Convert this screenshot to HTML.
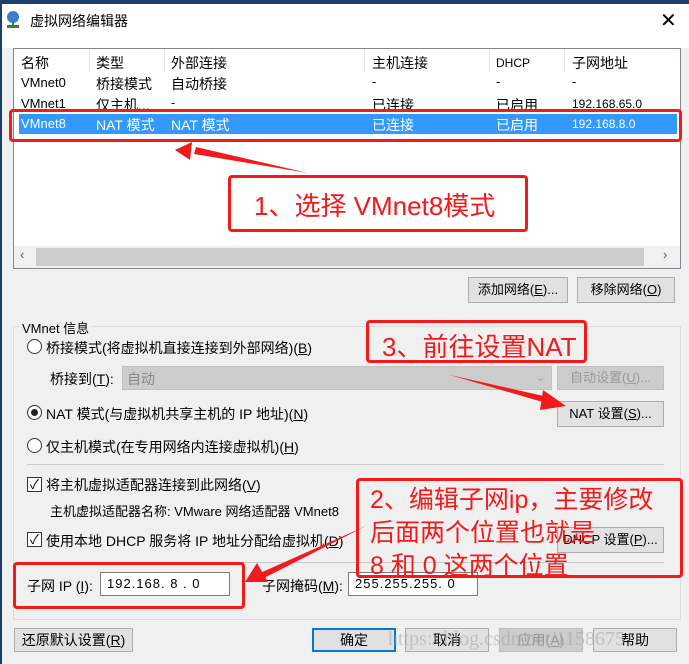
<!DOCTYPE html>
<html><head><meta charset="utf-8"><style>
*{margin:0;padding:0;box-sizing:border-box}
body{width:689px;height:664px;overflow:hidden;background:#f0f0f0;font-family:"Liberation Sans","Noto Sans CJK SC",sans-serif;font-size:13px;color:#000;position:relative}
.a{position:absolute;white-space:nowrap}
.btn{position:absolute;background:#e1e1e1;border:1px solid #adadad;text-align:center;font-size:13px}
.red{position:absolute;border:3px solid #f21a1a;border-radius:4px}
.rt{position:absolute;color:#f21a1a;font-size:26px;white-space:nowrap;font-family:"Liberation Sans","Noto Sans CJK SC",sans-serif}
.radio{position:absolute;width:15px;height:15px;border:1px solid #333;border-radius:50%;background:#fff}
.chk{position:absolute;width:15px;height:15px;border:1px solid #333;background:#fff;font-size:13px;line-height:13px;text-align:center}
.inp{position:absolute;background:#fff;border:1px solid #7a7a7a;font-size:13px;padding-left:6px;line-height:22px;letter-spacing:1px}
</style></head><body>
<div class="a" style="left:0;top:0;width:689px;height:4px;background:#1c3f6e"></div>
<div class="a" style="left:0;top:4px;width:689px;height:44px;background:#fff"></div>
<div class="a" style="left:0;top:0;width:2px;height:664px;background:#1c3f6e"></div>
<svg class="a" style="left:6px;top:10px" width="14" height="20"><circle cx="7" cy="7" r="6" fill="#3a7bd5"/><rect x="6" y="12" width="2" height="4" fill="#2a8a2a"/><rect x="1" y="15" width="12" height="3" fill="#2a8a2a"/></svg>
<div class="a" style="left:30px;top:11px;font-size:14px">虚拟网络编辑器</div>
<div class="a" style="left:660px;top:8px;font-size:20px;font-weight:300">✕</div>

<div class="a" style="left:13px;top:48px;width:668px;height:221px;background:#fff;border:1px solid #828790"></div>
<div class="a" style="left:21px;top:53px;font-size:14px">名称</div>
<div class="a" style="left:96px;top:53px;font-size:14px">类型</div>
<div class="a" style="left:171px;top:53px;font-size:14px">外部连接</div>
<div class="a" style="left:372px;top:53px;font-size:14px">主机连接</div>
<div class="a" style="left:496px;top:56px;font-size:12px">DHCP</div>
<div class="a" style="left:572px;top:53px;font-size:14px">子网地址</div>
<div class="a" style="left:89px;top:50px;width:1px;height:22px;background:#e5e5e5"></div>
<div class="a" style="left:164px;top:50px;width:1px;height:22px;background:#e5e5e5"></div>
<div class="a" style="left:364px;top:50px;width:1px;height:22px;background:#e5e5e5"></div>
<div class="a" style="left:489px;top:50px;width:1px;height:22px;background:#e5e5e5"></div>
<div class="a" style="left:564px;top:50px;width:1px;height:22px;background:#e5e5e5"></div>
<div class="a" style="left:21px;top:75px;font-size:13px">VMnet0</div><div class="a" style="left:96px;top:74px;font-size:14px">桥接模式</div><div class="a" style="left:171px;top:74px;font-size:14px">自动桥接</div><div class="a" style="left:372px;top:74px">-</div><div class="a" style="left:496px;top:74px">-</div><div class="a" style="left:572px;top:74px">-</div>
<div class="a" style="left:21px;top:96px">VMnet1</div><div class="a" style="left:96px;top:95px;font-size:14px">仅主机...</div><div class="a" style="left:171px;top:95px">-</div><div class="a" style="left:372px;top:95px;font-size:14px">已连接</div><div class="a" style="left:496px;top:95px;font-size:14px">已启用</div><div class="a" style="left:572px;top:97px;font-size:12px">192.168.65.0</div>
<div class="a" style="left:19px;top:114px;width:658px;height:20px;background:#3399ff"></div>
<div class="a" style="left:21px;top:116px;color:#fff">VMnet8</div><div class="a" style="left:96px;top:115px;color:#fff;font-size:14px">NAT 模式</div><div class="a" style="left:171px;top:115px;color:#fff;font-size:14px">NAT 模式</div><div class="a" style="left:372px;top:115px;color:#fff;font-size:14px">已连接</div><div class="a" style="left:496px;top:115px;color:#fff;font-size:14px">已启用</div><div class="a" style="left:572px;top:117px;color:#fff;font-size:12px">192.168.8.0</div>
<div class="a" style="left:14px;top:246px;width:666px;height:22px;background:#f0f0f0"></div>
<div class="a" style="left:36px;top:248px;width:608px;height:18px;background:#cdcdcd"></div>
<div class="a" style="left:20px;top:247px;color:#555">‹</div><div class="a" style="left:663px;top:247px;color:#555">›</div>

<div class="red" style="left:9px;top:109px;width:673px;height:33px"></div>
<div class="red" style="left:228px;top:175px;width:300px;height:57px"></div>
<div class="rt" style="left:254px;top:186px">1、选择 VMnet8模式</div>

<div class="btn" style="left:468px;top:277px;width:100px;height:26px;line-height:24px">添加网络(<u>E</u>)...</div>
<div class="btn" style="left:577px;top:277px;width:98px;height:26px;line-height:24px">移除网络(<u>O</u>)</div>

<div class="a" style="left:13px;top:326px;width:668px;height:294px;border:1px solid #dcdcdc"></div>
<div class="a" style="left:20px;top:318px;background:#f0f0f0;padding:0 2px">VMnet 信息</div>
<div class="radio" style="left:27px;top:339px"></div>
<div class="a" style="left:46px;top:338px;font-size:14px">桥接模式(将虚拟机直接连接到外部网络)(<u>B</u>)</div>
<div class="a" style="left:50px;top:369px;font-size:14px">桥接到(<u>T</u>):</div>
<div class="a" style="left:122px;top:366px;width:430px;height:24px;background:#cccccc;border:1px solid #c0c0c0"></div>
<div class="a" style="left:127px;top:369px;color:#888;font-size:14px">自动</div>
<div class="a" style="left:535px;top:369px;color:#aaa">⌄</div>
<div class="btn" style="left:557px;top:366px;width:107px;height:24px;line-height:22px;color:#999;background:#ccc;border-color:#bfbfbf">自动设置(<u>U</u>)...</div>
<div class="radio" style="left:27px;top:405px"></div><div class="a" style="left:31px;top:409px;width:7px;height:7px;border-radius:50%;background:#222"></div>
<div class="a" style="left:46px;top:404px;font-size:14px">NAT 模式(与虚拟机共享主机的 IP 地址)(<u>N</u>)</div>
<div class="btn" style="left:557px;top:401px;width:107px;height:26px;line-height:24px">NAT 设置(<u>S</u>)...</div>
<div class="radio" style="left:27px;top:438px"></div>
<div class="a" style="left:46px;top:437px;font-size:14px">仅主机模式(在专用网络内连接虚拟机)(<u>H</u>)</div>
<div class="a" style="left:27px;top:464px;width:637px;height:1px;background:#c8c8c8"></div>
<div class="chk" style="left:27px;top:477px">✓</div>
<div class="a" style="left:46px;top:475px;font-size:14px">将主机虚拟适配器连接到此网络(<u>V</u>)</div>
<div class="a" style="left:50px;top:501px;font-size:13px">主机虚拟适配器名称: VMware 网络适配器 VMnet8</div>
<div class="chk" style="left:27px;top:532px">✓</div>
<div class="a" style="left:46px;top:531px;font-size:14px">使用本地 DHCP 服务将 IP 地址分配给虚拟机(<u>D</u>)</div>
<div class="btn" style="left:557px;top:527px;width:107px;height:26px;line-height:24px">DHCP 设置(<u>P</u>)...</div>
<div class="a" style="left:27px;top:562px;width:637px;height:1px;background:#c8c8c8"></div>
<div class="a" style="left:27px;top:576px;font-size:14px">子网 IP (<u>I</u>):</div>
<div class="inp" style="left:100px;top:572px;width:130px;height:24px">192.168. 8 . 0</div>
<div class="a" style="left:262px;top:576px;font-size:14px">子网掩码(<u>M</u>):</div>
<div class="inp" style="left:348px;top:572px;width:130px;height:24px">255.255.255. 0</div>

<div class="red" style="left:366px;top:320px;width:221px;height:43px"></div>
<div class="rt" style="left:382px;top:327px">3、前往设置NAT</div>
<div class="red" style="left:356px;top:478px;width:327px;height:100px"></div>
<div class="rt" style="left:370px;top:484px;line-height:33px;font-size:25px">2、编辑子网ip，主要修改<br>后面两个位置也就是<br>8 和 0 这两个位置</div>
<div class="red" style="left:13px;top:562px;width:232px;height:47px"></div>

<svg class="a" style="left:0;top:0" width="689" height="664">
<polygon points="308,173 196,147 194,154" fill="#f21a1a"/>
<polygon points="175,150 192,142 190,160" fill="#f21a1a"/>
<polygon points="450,375 548,397 546,403" fill="#f21a1a"/>
<polygon points="566,406 543,390 540,410" fill="#f21a1a"/>
<polygon points="366,526 260,573 264,578" fill="#f21a1a"/>
<polygon points="245,582 257,563 268,582" fill="#f21a1a"/>
</svg>

<div class="btn" style="left:14px;top:628px;width:119px;height:24px;line-height:22px;font-size:14px">还原默认设置(<u>R</u>)</div>
<div class="btn" style="left:312px;top:628px;width:84px;height:24px;line-height:20px;border:2px solid #0078d7;font-size:14px">确定</div>
<div class="btn" style="left:405px;top:628px;width:84px;height:24px;line-height:22px;font-size:14px">取消</div>
<div class="btn" style="left:499px;top:628px;width:84px;height:24px;line-height:22px;color:#999;background:#ccc;border-color:#bfbfbf;font-size:14px">应用(<u>A</u>)</div>
<div class="btn" style="left:593px;top:628px;width:84px;height:24px;line-height:22px;font-size:14px">帮助</div>
<div class="a" style="left:388px;top:628px;color:rgba(160,160,160,0.5);font-family:'Liberation Serif',serif;font-size:20px">https://blog.csdn.net/1158675</div>
</body></html>
